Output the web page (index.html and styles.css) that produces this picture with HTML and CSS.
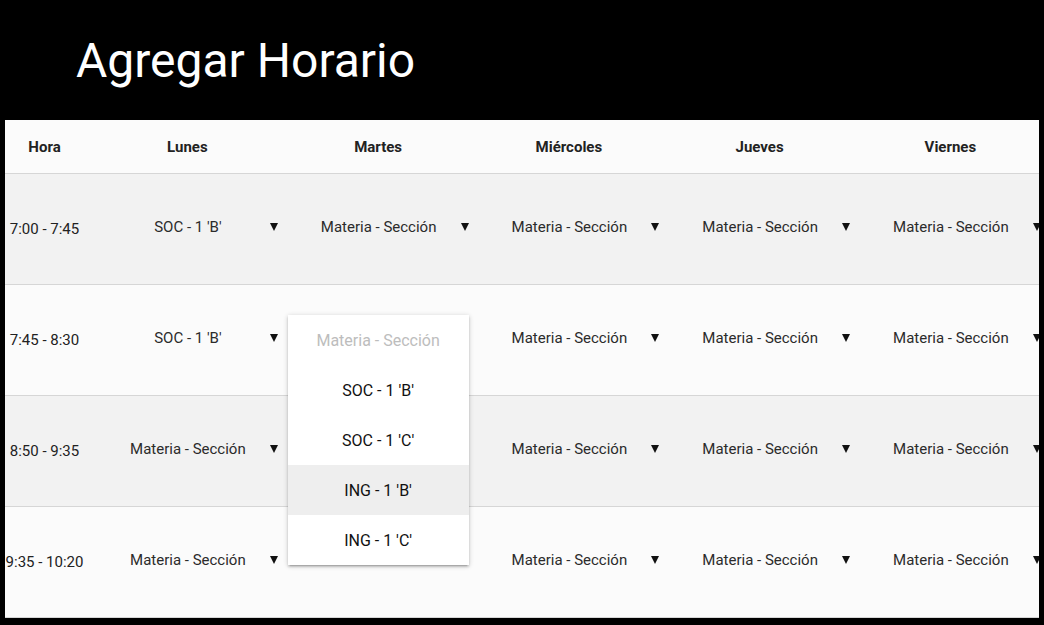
FILE: index.html
```html
<!DOCTYPE html>
<html lang="es">
<head>
<meta charset="utf-8">
<title>Agregar Horario</title>
<link rel="stylesheet" href="styles.css">
</head>
<body>
<header class="page-header">
  <h1 class="page-title">Agregar Horario</h1>
</header>
<div class="table-wrap">
  <table class="schedule">
    <colgroup>
      <col class="col-hora">
      <col class="col-day"><col class="col-day"><col class="col-day"><col class="col-day"><col class="col-day">
    </colgroup>
    <thead>
      <tr>
        <th class="th-hora">Hora</th>
        <th>Lunes</th>
        <th>Martes</th>
        <th>Miércoles</th>
        <th>Jueves</th>
        <th>Viernes</th>
      </tr>
    </thead>
    <tbody>
      <tr class="row-odd">
        <td class="hora">7:00 - 7:45</td>
        <td><div class="select"><span class="sel-text">SOC - 1 'B'</span><span class="caret"></span></div></td>
        <td><div class="select"><span class="sel-text">Materia - Sección</span><span class="caret"></span></div></td>
        <td><div class="select"><span class="sel-text">Materia - Sección</span><span class="caret"></span></div></td>
        <td><div class="select"><span class="sel-text">Materia - Sección</span><span class="caret"></span></div></td>
        <td><div class="select"><span class="sel-text">Materia - Sección</span><span class="caret"></span></div></td>
      </tr>
      <tr class="row-even">
        <td class="hora">7:45 - 8:30</td>
        <td><div class="select"><span class="sel-text">SOC - 1 'B'</span><span class="caret"></span></div></td>
        <td>
          <div class="select open">
            <ul class="dropdown">
              <li class="opt placeholder">Materia - Sección</li>
              <li class="opt">SOC - 1 'B'</li>
              <li class="opt">SOC - 1 'C'</li>
              <li class="opt hover">ING - 1 'B'</li>
              <li class="opt">ING - 1 'C'</li>
            </ul>
          </div>
        </td>
        <td><div class="select"><span class="sel-text">Materia - Sección</span><span class="caret"></span></div></td>
        <td><div class="select"><span class="sel-text">Materia - Sección</span><span class="caret"></span></div></td>
        <td><div class="select"><span class="sel-text">Materia - Sección</span><span class="caret"></span></div></td>
      </tr>
      <tr class="row-odd">
        <td class="hora">8:50 - 9:35</td>
        <td><div class="select"><span class="sel-text">Materia - Sección</span><span class="caret"></span></div></td>
        <td><div class="select"><span class="sel-text"></span></div></td>
        <td><div class="select"><span class="sel-text">Materia - Sección</span><span class="caret"></span></div></td>
        <td><div class="select"><span class="sel-text">Materia - Sección</span><span class="caret"></span></div></td>
        <td><div class="select"><span class="sel-text">Materia - Sección</span><span class="caret"></span></div></td>
      </tr>
      <tr class="row-even">
        <td class="hora">9:35 - 10:20</td>
        <td><div class="select"><span class="sel-text">Materia - Sección</span><span class="caret"></span></div></td>
        <td><div class="select"><span class="sel-text"></span></div></td>
        <td><div class="select"><span class="sel-text">Materia - Sección</span><span class="caret"></span></div></td>
        <td><div class="select"><span class="sel-text">Materia - Sección</span><span class="caret"></span></div></td>
        <td><div class="select"><span class="sel-text">Materia - Sección</span><span class="caret"></span></div></td>
      </tr>
    </tbody>
  </table>
</div>
</body>
</html>
```

FILE: styles.css
```css
html, body {
  margin: 0;
  padding: 0;
  background: #000;
  font-family: Roboto, "Noto Sans", sans-serif;
  overflow: hidden;
}

.page-header {
  height: 120px;
  box-sizing: border-box;
  padding: 37px 0 0 76px;
}

.page-title {
  margin: 0;
  font-size: 48px;
  font-weight: 400;
  line-height: 1;
  color: #fff;
}

.table-wrap {
  margin-left: 5px;
  width: 1034px;
  overflow: hidden;
}

.schedule {
  table-layout: fixed;
  border-collapse: collapse;
  width: 1040.75px;
}

.col-hora { width: 87px; }
.col-day { width: 190.75px; }

.schedule th {
  height: 53px;
  padding: 0;
  font-size: 15px;
  font-weight: 700;
  color: #222;
  text-align: center;
  vertical-align: middle;
  background: #fbfbfb;
  border-bottom: 1px solid #d6d6d6;
}

.schedule th.th-hora { padding-right: 8px; }

.schedule td {
  height: 110px;
  padding: 0 5px;
  vertical-align: middle;
  border-bottom: 1px solid #d6d6d6;
}

.row-odd { background: #f2f2f2; }
.row-even { background: #fbfbfb; }

.schedule td.hora {
  padding: 0 8px 0 0;
  text-align: center;
  font-size: 15px;
  color: #222;
  white-space: nowrap;
}

.select {
  position: relative;
  display: flex;
  align-items: center;
  height: 45px;
  margin-bottom: 5px;
  padding: 0 0 0 9px;
  font-size: 15px;
  color: #2b2b2b;
}

.sel-text {
  flex: 1;
  text-align: center;
  white-space: nowrap;
}

.caret {
  width: 0;
  height: 0;
  border-left: 4px solid transparent;
  border-right: 4px solid transparent;
  border-top: 8px solid #111;
}

.dropdown {
  position: absolute;
  top: 0;
  left: 0;
  width: 100%;
  margin: 0;
  padding: 0;
  list-style: none;
  background: #fff;
  z-index: 10;
  box-shadow: 0 2px 2px 0 rgba(0,0,0,.14), 0 3px 1px -2px rgba(0,0,0,.12), 0 1px 5px 0 rgba(0,0,0,.2);
}

.opt {
  height: 50px;
  display: flex;
  align-items: center;
  justify-content: center;
  font-size: 16px;
  color: #111;
  white-space: nowrap;
}

.opt.placeholder { color: #bdbdbd; }
.opt.hover { background: #eee; }
```
